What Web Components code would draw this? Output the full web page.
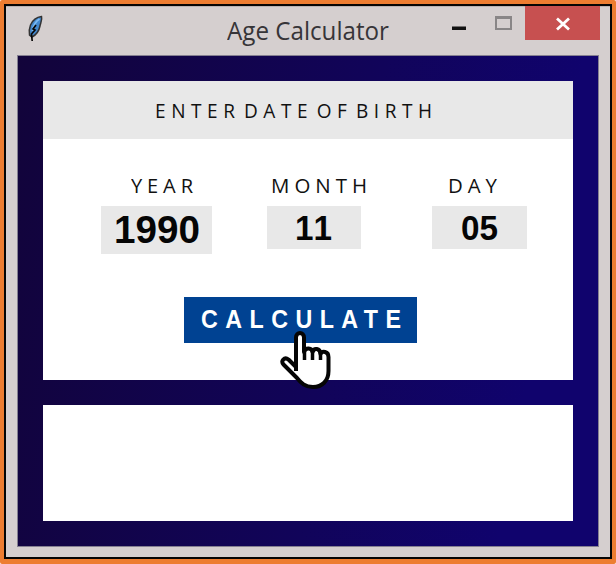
<!DOCTYPE html>
<html lang="en"><head><meta charset="utf-8"><title>Age Calculator</title>
<style>html,body{margin:0;width:616px;height:564px;overflow:hidden;background:#fff;font-family:"Open Sans","Noto Sans",sans-serif;color:#111}</style></head>
<body>
<app-window>
<title-bar slot="title">Age Calculator</title-bar>
<birth-form></birth-form>
<result-panel></result-panel>
</app-window>
<script>
const define=(name,html,init)=>customElements.define(name,class extends HTMLElement{
  constructor(){super();this.attachShadow({mode:'open'}).innerHTML=html;}
  connectedCallback(){if(init)init(this);}
});
// Single-line label stretched horizontally to the width given in its attribute.
define('fit-label',`<style>:host{display:block;white-space:nowrap;line-height:1}span{display:inline-block;transform-origin:0 50%}</style><span><slot></slot></span>`,el=>{
  const s=el.shadowRoot.querySelector('span'),w=+el.getAttribute('width');
  const ls=parseFloat(getComputedStyle(el).letterSpacing)||0;
  s.style.transform=`scaleX(${w/(s.getBoundingClientRect().width-ls)})`;
  el.style.width=w+'px';
});
define('feather-icon',`<style>:host,svg{display:block;width:18px;height:28px}</style>
<svg viewBox="0 0 18 28"><path d="M14.500 1.500C10 2 5.500 5.500 3.500 10C2 14 1.800 17 2.500 20L5 22C9 20 12 16 13 11C13.500 8 15.500 5 14.500 1.500Z" fill="#4388cd" stroke="#333" stroke-width="1.500"/><path d="M12.500 4C9 6 6.500 10 5.500 16" stroke="#7ab9f2" stroke-width="2" fill="none"/><path d="M9 10L6 14L8 15L4.500 19L5.200 26" stroke="#080808" stroke-width="1.700" fill="none"/></svg>`);
define('title-bar',`<style>
:host{display:flex;height:49px;padding-left:21px;align-items:flex-start}
feather-icon{margin-top:9px}
fit-label{font-size:25px;color:#373538;margin:12px 0 0 182px}
svg{display:block;flex:none}
.min{margin:20px 0 0 63px}
.max{margin:10px 0 0 29px}
.close{margin-left:13px;background:#c75050}
</style><feather-icon></feather-icon><fit-label width="162"><slot></slot></fit-label>
<svg class="min" width="14" height="5"><path d="M0 .500H14V4H0Z" fill="#111"/></svg>
<svg class="max" width="17" height="14"><path d="M1 1.500H16V13H1Z" fill="none" stroke="#898687" stroke-width="2"/><path d="M0 1.500H17" stroke="#898687" stroke-width="3"/></svg>
<svg class="close" width="75" height="34" viewBox="0 0 75 34"><path d="M32 12.500L44 23.500M44 12.500L32 23.500" stroke="#fff" stroke-width="2.800"/></svg>`);
define('app-window',`<style>
:host{display:block;box-sizing:border-box;width:616px;height:564px;background:#ed7d31;border-radius:2px;padding:4px 4px 5px}
.frame{box-sizing:border-box;height:555px;border:2px solid #050505;background:#d5cfcf;box-shadow:inset 0 1px #b9b4b4}
.client{box-sizing:border-box;margin-left:11px;width:582px;height:492px;border:1px solid #858091;background:linear-gradient(100deg,#12043a 0%,#11045a 55%,#10036d 85%,#10036d);padding:25px;display:flex;flex-direction:column;gap:25px}
</style><div class="frame"><slot name="title"></slot><div class="client"><slot></slot></div></div>`);
// metrics: label width, label indent, box width, box height, value width, value font size.
define('date-field',`<style>
:host{display:flex;flex-direction:column;align-items:flex-start}
.l{font-size:20.500px;letter-spacing:5px;height:31px}
.box{background:#e8e8e8;display:flex;justify-content:center;align-items:center;color:#050505}
.v{font-family:"Liberation Sans",Arial,sans-serif;font-weight:700;font-kerning:none}
</style><div class="box"></div>`,el=>{
  const [lw,lx,bw,bh,vw,fs]=el.getAttribute('metrics').split(' ').map(Number);
  const b=el.shadowRoot.querySelector('.box'),l=document.createElement('fit-label'),v=document.createElement('fit-label');
  l.className='l';l.textContent=el.getAttribute('label');l.setAttribute('width',lw);l.style.marginLeft=lx+'px';
  v.className='v';v.textContent=el.getAttribute('value');v.setAttribute('width',vw);v.style.fontSize=fs+'px';
  b.style.width=bw+'px';b.style.height=bh+'px';
  b.before(l);b.append(v);
});
define('hand-cursor',`<style>:host,svg{display:block;width:52px;height:60px}</style>
<svg viewBox="0 0 52 60"><path d="M16 41V7.500C16 1.500 24 1.500 24 7.500V22C25.500 17 32 17.500 32.500 22C34 17.500 40 18 40.500 24C42 20.500 48.500 21 48.500 27V41C48.500 51 42 57 33 57C25 57 21 53 17 48L3.500 34.500C0 31 4.500 26.500 8.500 29.500L16 37" fill="#fff" stroke="#050505" stroke-width="4" stroke-linejoin="round"/><path d="M24.500 18V30M32.500 20V30M40.500 23V30" stroke="#050505" stroke-width="3.500"/></svg>`);
define('calc-button',`<style>
:host{display:flex;box-sizing:border-box;padding:0 0 2px 17px;position:relative;width:233px;height:46px;background:#004292;align-items:center}
fit-label{font:700 25px/1 "Liberation Sans",Arial,sans-serif;letter-spacing:8px;color:#fff}
hand-cursor{position:absolute;left:96px;top:33px}
</style><fit-label width="200">CALCULATE</fit-label><hand-cursor></hand-cursor>`);
define('birth-form',`<style>
:host{display:flex;flex-direction:column;width:530px;height:299px;background:#fff}
header{height:58px;background:#e8e8e8;display:flex;align-items:center;padding-left:112px}
header fit-label{font-size:20.500px;letter-spacing:6px;word-spacing:-7.500px}
.fields{display:grid;grid-template-columns:165.500px 165.500px 95px;padding:36px 0 0 58px;height:122px;box-sizing:content-box}
calc-button{margin-left:141px}
</style><header><fit-label width="277">ENTER DATE OF BIRTH</fit-label></header>
<div class="fields"><date-field label="YEAR" value="1990" metrics="62 30 111 48 86 39.500"></date-field>
<date-field label="MONTH" value="11" metrics="96 4 94.500 43 37 35"></date-field>
<date-field label="DAY" value="05" metrics="49 16 94.500 43 37 35"></date-field></div><calc-button></calc-button>`);
define('result-panel',`<style>:host{display:block;width:530px;height:116px;background:#fff}</style>`);
</script></body></html>
